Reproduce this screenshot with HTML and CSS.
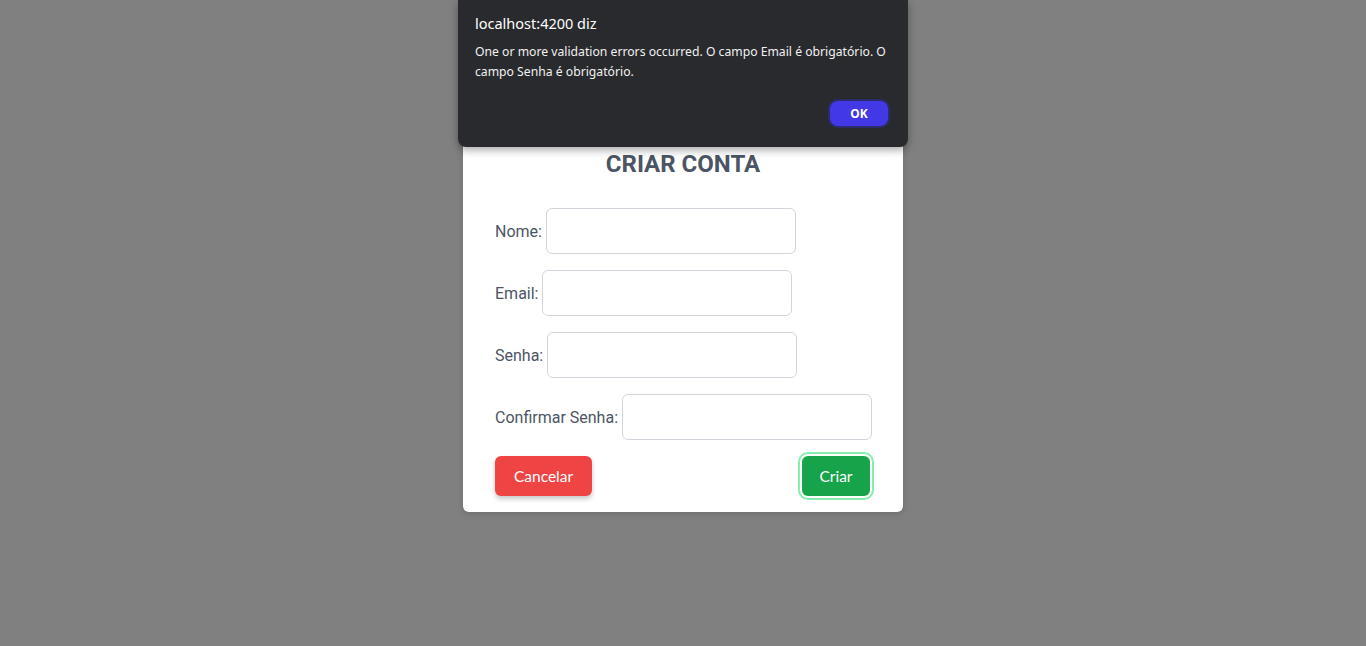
FILE: index.html
```html
<!DOCTYPE html>
<html lang="pt">
<head>
<meta charset="utf-8">
<title>Criar conta</title>
<link rel="stylesheet" href="styles.css">
</head>
<body>
<main class="page">
  <section class="card">
    <h1 class="title">CRIAR CONTA</h1>
    <form class="form">
      <div class="row"><label for="nome">Nome:</label><input id="nome" class="field" type="text"></div>
      <div class="row"><label for="email">Email:</label><input id="email" class="field" type="email"></div>
      <div class="row"><label for="senha">Senha:</label><input id="senha" class="field" type="password"></div>
      <div class="row"><label for="conf">Confirmar Senha:</label><input id="conf" class="field" type="password"></div>
      <div class="actions">
        <button type="button" class="btn btn-cancel">Cancelar</button>
        <button type="button" class="btn btn-create">Criar</button>
      </div>
    </form>
  </section>
</main>
<div class="dialog" role="alertdialog">
  <div class="dialog-title">localhost:4200 diz</div>
  <div class="dialog-msg">One or more validation errors occurred. O campo Email é obrigatório. O campo Senha é obrigatório.</div>
  <div class="dialog-actions"><button type="button" class="dialog-ok">OK</button></div>
</div>
</body>
</html>
```
FILE: styles.css
```css
* { box-sizing: border-box; }
html, body { margin: 0; height: 100%; }
body {
  background: #808080;
  font-family: Roboto, "Liberation Sans", sans-serif;
  overflow: hidden;
}
.page {
  display: flex;
  justify-content: center;
  padding-top: 132px;
}
.card {
  width: 440px;
  background: #fff;
  border-radius: 6px;
  padding: 16px 32px;
  box-shadow: 0 2px 6px rgba(0,0,0,0.15);
}
.title {
  margin: 0 0 28px;
  font-size: 24px;
  line-height: 32px;
  font-weight: 700;
  color: #4b5563;
  text-align: center;
}
.form {
  display: flex;
  flex-direction: column;
  gap: 16px;
}
.row {
  display: flex;
  align-items: center;
  gap: 4px;
}
.row label {
  font-size: 16px;
  color: #4b5563;
  white-space: nowrap;
}
.field {
  flex-shrink: 0;
  width: 250px;
  height: 46px;
  border: 1px solid #d1d5db;
  border-radius: 6px;
  background: #fff;
  outline: none;
}
.actions {
  display: flex;
  justify-content: space-between;
  align-items: center;
}
.btn {
  height: 40px;
  border: none;
  border-radius: 6px;
  color: #fff;
  font-family: Lato, "Noto Sans", sans-serif;
  font-size: 15.5px;
  cursor: pointer;
}
.btn-cancel {
  width: 97px;
  background: #ef4444;
  box-shadow: 0 3px 5px rgba(0,0,0,0.22);
}
.btn-create {
  width: 68px;
  margin-right: 1px;
  background: #16a34a;
  box-shadow: 0 0 0 2px #fff, 0 0 0 4px #86efac;
}
.dialog {
  position: absolute;
  top: 0;
  left: 458px;
  width: 450px;
  height: 147px;
  background: #292a2d;
  border-radius: 0 0 8px 8px;
  box-shadow: 0 3px 8px rgba(0,0,0,0.35);
  padding: 13px 14px 0 17px;
  font-family: "Noto Sans", "Open Sans", sans-serif;
  color: #fff;
}
.dialog-title {
  font-size: 14.5px;
  line-height: 20px;
}
.dialog-msg {
  margin-top: 9px;
  font-size: 12.2px;
  line-height: 20px;
  color: #f1f1f1;
}
.dialog-actions {
  display: flex;
  justify-content: flex-end;
  margin-top: 19px;
}
.dialog-ok {
  width: 58px;
  height: 25px;
  margin-right: 6px;
  border: none;
  border-radius: 8px;
  background: #4338e6;
  box-shadow: 0 0 0 2px #2b2c6c;
  color: #fff;
  font-family: "Noto Sans", sans-serif;
  font-weight: 700;
  font-size: 12px;
}
```
